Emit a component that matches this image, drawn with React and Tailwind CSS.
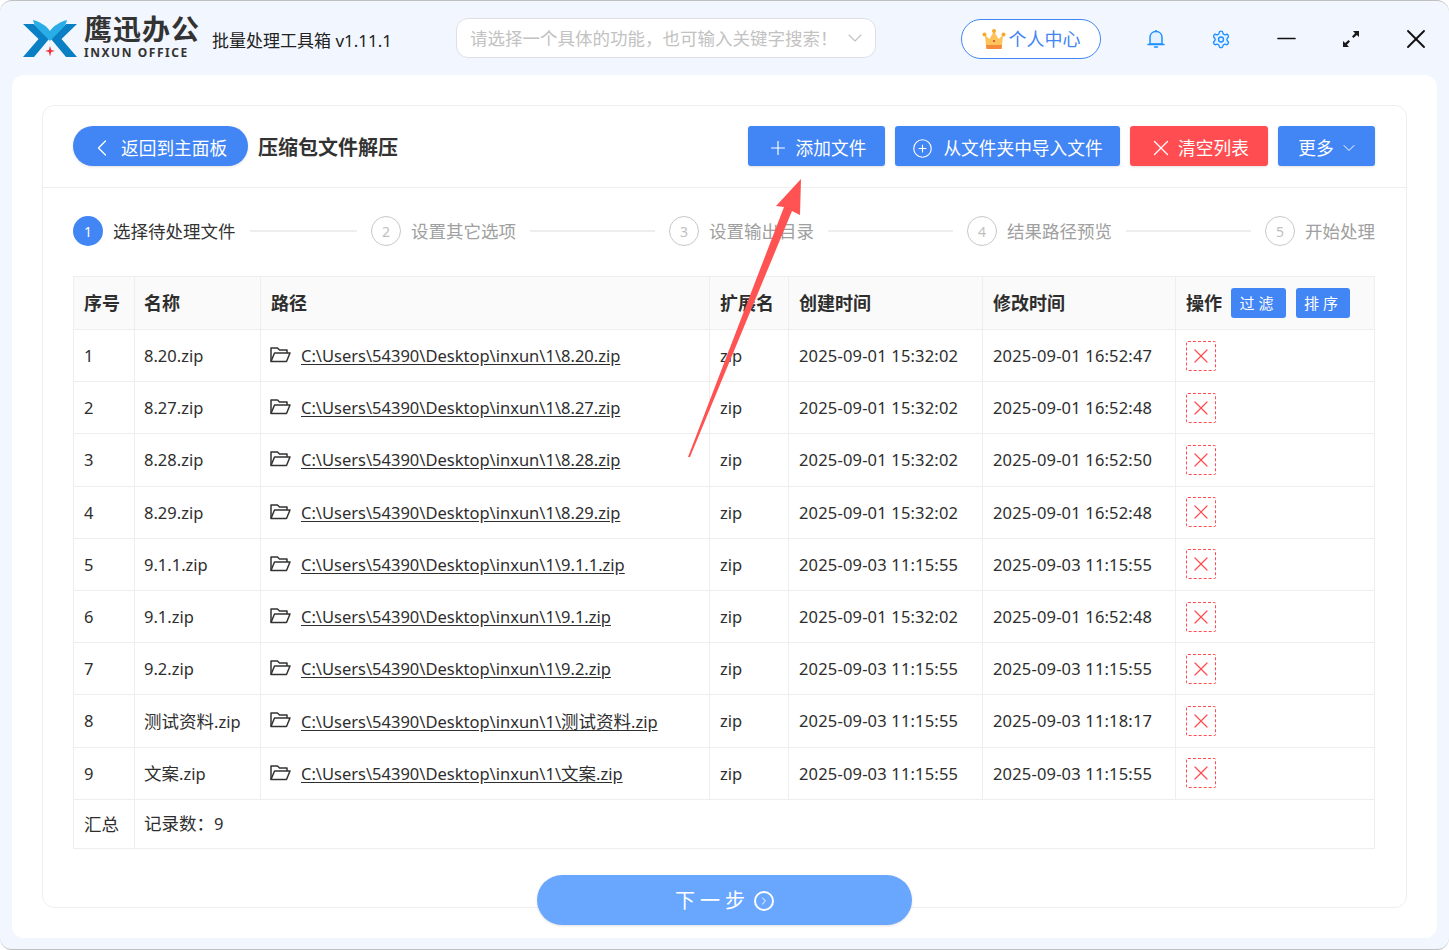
import { ChevronLeft, ChevronDown, Plus, CirclePlus, X, Settings, Minus, ChevronRight } from 'lucide-react';

const rows = [
  ['1', '8.20.zip', 'C:\\Users\\54390\\Desktop\\inxun\\1\\8.20.zip', '2025-09-01 15:32:02', '2025-09-01 16:52:47'],
  ['2', '8.27.zip', 'C:\\Users\\54390\\Desktop\\inxun\\1\\8.27.zip', '2025-09-01 15:32:02', '2025-09-01 16:52:48'],
  ['3', '8.28.zip', 'C:\\Users\\54390\\Desktop\\inxun\\1\\8.28.zip', '2025-09-01 15:32:02', '2025-09-01 16:52:50'],
  ['4', '8.29.zip', 'C:\\Users\\54390\\Desktop\\inxun\\1\\8.29.zip', '2025-09-01 15:32:02', '2025-09-01 16:52:48'],
  ['5', '9.1.1.zip', 'C:\\Users\\54390\\Desktop\\inxun\\1\\9.1.1.zip', '2025-09-03 11:15:55', '2025-09-03 11:15:55'],
  ['6', '9.1.zip', 'C:\\Users\\54390\\Desktop\\inxun\\1\\9.1.zip', '2025-09-01 15:32:02', '2025-09-01 16:52:48'],
  ['7', '9.2.zip', 'C:\\Users\\54390\\Desktop\\inxun\\1\\9.2.zip', '2025-09-03 11:15:55', '2025-09-03 11:15:55'],
  ['8', '测试资料.zip', 'C:\\Users\\54390\\Desktop\\inxun\\1\\测试资料.zip', '2025-09-03 11:15:55', '2025-09-03 11:18:17'],
  ['9', '文案.zip', 'C:\\Users\\54390\\Desktop\\inxun\\1\\文案.zip', '2025-09-03 11:15:55', '2025-09-03 11:15:55'],
];

const steps = [
  ['1', '选择待处理文件'],
  ['2', '设置其它选项'],
  ['3', '设置输出目录'],
  ['4', '结果路径预览'],
  ['5', '开始处理'],
];

// chinese runs are a bit bigger than the latin ones next to them
function Mixed({ text }) {
  return text.split(/([\u4e00-\u9fff：]+)/).map((part, i) =>
    i % 2 === 1 ? <span key={i} className="text-[17.5px]">{part}</span> : part
  );
}

function Logo() {
  return (
    <svg width="54" height="37" viewBox="0 0 54 37">
      <path d="M0 4 H11 L26 19 L11 37 H0 L15.5 19 Z" fill="#0b7fc4" />
      <path d="M54 4 H43 L28 19 L43 37 H54 L38.5 19 Z" fill="#0b7fc4" />
      <path d="M10 0 C17 2 24 6 27 11 C30 6 37 2 44 0 C43 7 33 14 27 21 C21 14 11 7 10 0 Z" fill="#29ade6" />
      <path d="M27 26 L28.2 30 L32 31 L28.2 32 L27 36.5 L25.8 32 L22 31 L25.8 30 Z" fill="#f0323c" />
    </svg>
  );
}

function Crown() {
  return (
    <svg width="24" height="22" viewBox="0 0 24 22">
      <path d="M3 7 L7.5 11 L12 3 L16.5 11 L21 7 L20 18 L4 18 Z" fill="#fdc45c" />
      <circle cx="2.5" cy="6.5" r="2" fill="#f9a825" />
      <circle cx="21.5" cy="6.5" r="2" fill="#f9a825" />
      <circle cx="12" cy="3" r="2" fill="#f9a825" />
      <path d="M4 17 H20 L19.6 21 H4.4 Z" fill="#f58a3c" />
      <circle cx="12" cy="13" r="1" fill="#d8342c" />
    </svg>
  );
}

function Bell() {
  return (
    <svg width="18" height="20" viewBox="0 0 18 20" fill="#e3f2fe" stroke="#1e8fff" strokeWidth="1.5">
      <path d="M3 15 V8.5 C3 5 5.5 2.5 9 2.5 C12.5 2.5 15 5 15 8.5 V15 Z" />
      <path d="M1 15.5 H17" strokeLinecap="round" />
      <path d="M7.5 18 H10.5" strokeLinecap="round" />
      <path d="M9 1 V2.5" />
    </svg>
  );
}

function Expand() {
  return (
    <svg width="18" height="18" viewBox="0 0 18 18" fill="#1a1a1a">
      <path d="M11 1 H17 V7 L14.8 4.9 L11.5 8 L10 6.5 L13.1 3.2 Z" />
      <path d="M7 17 H1 V11 L3.2 13.1 L6.5 10 L8 11.5 L4.9 14.8 Z" />
    </svg>
  );
}

function Folder() {
  return (
    <svg width="21" height="17" viewBox="0 0 21 17" fill="none" stroke="#333" strokeWidth="1.5" strokeLinejoin="round" className="-mt-[3px] shrink-0">
      <path d="M1 15.5 V2 H7.5 L9.5 4 H17 V7" />
      <path d="M1 15.5 H16.5 L20 7 H4.5 Z" />
    </svg>
  );
}

export default function App() {
  return (
    <div
      className="relative h-[950px] w-[1449px] overflow-hidden rounded-xl border-y border-[#c0c0c0] bg-[#f2f6fe] text-[16.5px] text-[#2e2e2e]"
      style={{ fontFamily: '"Noto Sans", "Noto Sans CJK SC", sans-serif' }}
    >
      {/* title bar */}
      <div className="flex h-[74px] items-center">
        <div className="ml-[23px] flex w-[54px] shrink-0 items-center">
          <Logo />
        </div>
        <div className="-mt-[4px] ml-[7px] flex w-[122px] shrink-0 flex-col">
          <span className="text-[28px] font-bold leading-[33px] tracking-[1px] text-[#333]">鹰迅办公</span>
          <span className="text-[12px] font-bold leading-[13px] tracking-[1.55px] text-[#333]">INXUN OFFICE</span>
        </div>
        <div className="ml-[6px] mt-[5px] w-[244px] shrink-0 text-[17px] text-[#222]">批量处理工具箱 v1.11.1</div>
        <div className="flex h-[40px] w-[420px] shrink-0 items-center justify-between rounded-xl border border-[#dcdfe6] bg-white pl-[13px] pr-[8px] text-[#c2c2c2]">
          <span className="text-[17.5px]">请选择一个具体的功能，也可输入关键字搜索！</span>
          <ChevronDown size={24} strokeWidth={1.1} />
        </div>
        <div className="ml-[85px] mt-[1px] flex h-[40px] w-[140px] shrink-0 items-center justify-center gap-[3px] rounded-full border border-[#4285f4] bg-white text-[18px] text-[#4285f4]">
          <Crown />
          <span className="pt-[1px]">个人中心</span>
        </div>
        <div className="ml-[45px] mt-[2px] flex w-[20px] justify-center">
          <Bell />
        </div>
        <div className="ml-[45px] mt-[2px] flex w-[20px] justify-center">
          <Settings size={23} strokeWidth={1.6} color="#1e8fff" fill="#e3f2fe" />
        </div>
        <Minus className="ml-[41px] mt-[1px]" size={29} strokeWidth={1.4} color="#111" />
        <div className="ml-[41px] mt-[2px]">
          <Expand />
        </div>
        <X className="ml-[40px] mt-[2px]" size={32} strokeWidth={1.4} color="#111" />
      </div>

      {/* white sheet */}
      <div className="mx-[12px] h-[863px] w-[1425px] rounded-xl bg-white px-[30px] pt-[30px]">
        <div className="h-[803px] rounded-xl border border-[#eeeeee] bg-white">
          {/* toolbar */}
          <div className="flex h-[82px] items-center border-b border-[#eeeeee] pl-[30px] pr-[31px] pb-[2px]">
            <button className="flex h-[40px] w-[175px] items-center rounded-full bg-[#4285f4] pl-[15px] pt-[5px] text-[17.7px] text-white shadow-sm">
              <ChevronLeft size={28} strokeWidth={1.1} />
              <span className="ml-[5px]">返回到主面板</span>
            </button>
            <span className="ml-[10px] pt-[5px] text-[20px] font-bold text-[#333]">压缩包文件解压</span>
            <div className="ml-auto flex gap-[10px]">
              <button className="flex h-[40px] w-[137px] items-center justify-center gap-[7px] rounded-[3px] bg-[#4285f4] pt-[5px] text-[17.7px] text-white shadow-sm">
                <Plus size={22} strokeWidth={1.3} />
                添加文件
              </button>
              <button className="flex h-[40px] w-[225px] items-center justify-center gap-[10px] rounded-[3px] bg-[#4285f4] pt-[5px] text-[17.7px] text-white shadow-sm">
                <CirclePlus size={21} strokeWidth={1.3} />
                从文件夹中导入文件
              </button>
              <button className="flex h-[40px] w-[138px] items-center justify-center gap-[4px] rounded-[3px] bg-[#ff4d51] pr-[1px] pt-[5px] text-[17.7px] text-white shadow-sm">
                <X size={26} strokeWidth={1.2} />
                清空列表
              </button>
              <button className="flex h-[40px] w-[97px] items-center justify-center gap-[5px] rounded-[3px] bg-[#4285f4] pl-[4px] pt-[5px] text-[17.7px] text-white shadow-sm">
                更多
                <ChevronDown size={20} strokeWidth={1.2} />
              </button>
            </div>
          </div>

          {/* steps */}
          <div className="flex h-[88px] items-center pb-[2px] pl-[30px] pr-[31px]">
            {steps.map(([num, label], i) => (
              <div key={num} className={i < 4 ? 'flex flex-1 items-center' : 'flex items-center'}>
                <span
                  className={
                    i === 0
                      ? 'flex h-[30px] w-[30px] items-center justify-center rounded-full bg-[#4285f4] text-[14px] text-white'
                      : 'flex h-[30px] w-[30px] items-center justify-center rounded-full border border-[#c8c8c8] text-[14px] text-[#c0c0c0]'
                  }
                >
                  {num}
                </span>
                <span className={i === 0 ? 'ml-[10px] text-[17.5px] text-[#333]' : 'ml-[10px] text-[17.5px] text-[#a0a0a0]'}>
                  {label}
                </span>
                {i < 4 && <span className="mx-[14px] h-[2px] flex-1 bg-[#eeeeee]" />}
              </div>
            ))}
          </div>

          {/* table */}
          <div className="pl-[30px]">
            <table className="w-[1301px] table-fixed border-collapse border border-[#eeeeee] leading-[24px]">
              <colgroup>
                <col className="w-[61px]" />
                <col className="w-[126px]" />
                <col className="w-[449px]" />
                <col className="w-[79px]" />
                <col className="w-[194px]" />
                <col className="w-[193px]" />
                <col className="w-[199px]" />
              </colgroup>
              <thead>
                <tr className="h-[53px] bg-[#fafafa] text-left text-[18px] font-bold">
                  <th className="border border-[#eeeeee] pl-[10px]">序号</th>
                  <th className="border border-[#eeeeee] pl-[9px]">名称</th>
                  <th className="border border-[#eeeeee] pl-[10px]">路径</th>
                  <th className="border border-[#eeeeee] pl-[10px]">扩展名</th>
                  <th className="border border-[#eeeeee] pl-[10px]">创建时间</th>
                  <th className="border border-[#eeeeee] pl-[10px]">修改时间</th>
                  <th className="border border-[#eeeeee] pl-[10px]">
                    <div className="flex items-center">
                      操作
                      <span className="ml-[9px] flex h-[30px] w-[55px] items-center justify-center rounded-[3px] bg-[#4285f4] text-[15px] font-normal tracking-[4px] text-white">过滤</span>
                      <span className="ml-[10px] flex h-[30px] w-[54px] items-center justify-center rounded-[3px] bg-[#4285f4] text-[15px] font-normal tracking-[4px] text-white">排序</span>
                    </div>
                  </th>
                </tr>
              </thead>
              <tbody>
                {rows.map((r) => (
                  <tr key={r[0]} className="h-[52.2px]">
                    <td className="border border-[#eeeeee] pl-[10px] pt-[1px]">{r[0]}</td>
                    <td className="border border-[#eeeeee] pl-[9px] pt-[1px]"><Mixed text={r[1]} /></td>
                    <td className="border border-[#eeeeee] pl-[9px] pt-[1px]">
                      <div className="flex items-center">
                        <Folder />
                        <span className="ml-[10px] underline underline-offset-2"><Mixed text={r[2]} /></span>
                      </div>
                    </td>
                    <td className="border border-[#eeeeee] pl-[10px] pt-[1px]">zip</td>
                    <td className="border border-[#eeeeee] pl-[10px] pt-[1px] tracking-[0.17px]">{r[3]}</td>
                    <td className="border border-[#eeeeee] pl-[10px] pt-[1px] tracking-[0.17px]">{r[4]}</td>
                    <td className="border border-[#eeeeee] pl-[10px]">
                      <span className="flex h-[30px] w-[30px] items-center justify-center rounded-[2px] border border-dashed border-[#ff4d51] text-[#ff4d51]">
                        <X size={24} strokeWidth={1.2} />
                      </span>
                    </td>
                  </tr>
                ))}
                <tr className="h-[49px]">
                  <td className="border border-[#eeeeee] pl-[10px] text-[17.5px]">汇总</td>
                  <td colSpan={6} className="border border-[#eeeeee] pl-[9px]"><Mixed text="记录数：9" /></td>
                </tr>
              </tbody>
            </table>
          </div>
        </div>
      </div>

      {/* next button sits over the card edge */}
      <button className="absolute left-[537px] top-[874px] flex h-[50px] w-[375px] items-center justify-center rounded-full bg-[#69a7ff] pt-[2px] text-[20px] text-white shadow-sm">
        <span className="tracking-[5px]">下一步</span>
        <span className="ml-[4px] flex h-[20px] w-[20px] items-center justify-center rounded-full border-2 border-white">
          <ChevronRight size={12} strokeWidth={2} />
        </span>
      </button>

      {/* annotation arrow */}
      <svg className="pointer-events-none absolute left-0 top-0" width="1449" height="950" viewBox="0 0 1449 950">
        <polygon points="688,456 784,206 776,205 801,178 800,214 792,210 690,456" fill="#ff5252" />
      </svg>
    </div>
  );
}
